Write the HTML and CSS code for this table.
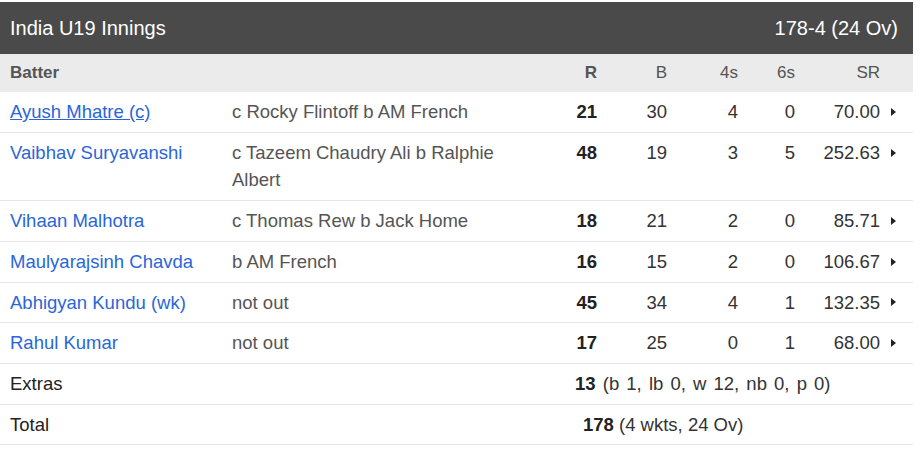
FILE: index.html
```html
<!DOCTYPE html>
<html>
<head>
<meta charset="utf-8">
<link rel="stylesheet" href="styles.css">
</head>
<body>
<div class="card">
  <div class="title">
    <span>India U19 Innings</span>
    <span>178-4 (24 Ov)</span>
  </div>
  <div class="row head">
    <div class="c-name bold">Batter</div>
    <div></div>
    <div class="num bold">R</div>
    <div class="num">B</div>
    <div class="num">4s</div>
    <div class="num">6s</div>
    <div class="num">SR</div>
    <div></div>
  </div>
  <div class="row">
    <div class="c-name"><a class="link underline" href="#">Ayush Mhatre (c)</a></div>
    <div class="dis">c Rocky Flintoff b AM French</div>
    <div class="num runs">21</div>
    <div class="num">30</div>
    <div class="num">4</div>
    <div class="num">0</div>
    <div class="num">70.00</div>
    <div class="arr"><span class="tri"></span></div>
  </div>
  <div class="row">
    <div class="c-name"><a class="link" href="#">Vaibhav Suryavanshi</a></div>
    <div class="dis">c Tazeem Chaudry Ali b Ralphie Albert</div>
    <div class="num runs">48</div>
    <div class="num">19</div>
    <div class="num">3</div>
    <div class="num">5</div>
    <div class="num">252.63</div>
    <div class="arr"><span class="tri"></span></div>
  </div>
  <div class="row">
    <div class="c-name"><a class="link" href="#">Vihaan Malhotra</a></div>
    <div class="dis">c Thomas Rew b Jack Home</div>
    <div class="num runs">18</div>
    <div class="num">21</div>
    <div class="num">2</div>
    <div class="num">0</div>
    <div class="num">85.71</div>
    <div class="arr"><span class="tri"></span></div>
  </div>
  <div class="row">
    <div class="c-name"><a class="link" href="#">Maulyarajsinh Chavda</a></div>
    <div class="dis">b AM French</div>
    <div class="num runs">16</div>
    <div class="num">15</div>
    <div class="num">2</div>
    <div class="num">0</div>
    <div class="num">106.67</div>
    <div class="arr"><span class="tri"></span></div>
  </div>
  <div class="row">
    <div class="c-name"><a class="link" href="#">Abhigyan Kundu (wk)</a></div>
    <div class="dis">not out</div>
    <div class="num runs">45</div>
    <div class="num">34</div>
    <div class="num">4</div>
    <div class="num">1</div>
    <div class="num">132.35</div>
    <div class="arr"><span class="tri"></span></div>
  </div>
  <div class="row">
    <div class="c-name"><a class="link" href="#">Rahul Kumar</a></div>
    <div class="dis">not out</div>
    <div class="num runs">17</div>
    <div class="num">25</div>
    <div class="num">0</div>
    <div class="num">1</div>
    <div class="num">68.00</div>
    <div class="arr"><span class="tri"></span></div>
  </div>
  <div class="row">
    <div class="c-name label">Extras</div>
    <div></div>
    <div class="summary extras"><b>13</b> (b 1, lb 0, w 12, nb 0, p 0)</div>
  </div>
  <div class="row">
    <div class="c-name label">Total</div>
    <div></div>
    <div class="summary total"><b>178</b> (4 wkts, 24 Ov)</div>
  </div>
</div>
</body>
</html>
```

FILE: styles.css
```css
html, body {
  margin: 0;
  padding: 0;
  background: #fff;
}
body {
  font-family: "Liberation Sans", Arial, sans-serif;
  padding-top: 2px;
}
.card {
  width: 913px;
}
.title {
  display: flex;
  justify-content: space-between;
  align-items: center;
  height: 52px;
  background: #4a4a4a;
  color: #fff;
  font-size: 20px;
  padding: 0 15px 0 10px;
  box-sizing: border-box;
}
.row {
  display: grid;
  grid-template-columns: 232px 300px 65px 70px 71px 57px 85px 1fr;
  align-items: start;
  font-size: 18.5px;
  line-height: 27.7px;
  padding: 6px 0;
  border-bottom: 1px solid #e6e6e6;
  color: #333;
}
.row.head {
  background: #ebebeb;
  color: #555;
  font-size: 17px;
  line-height: 26px;
  padding: 6px 0;
  border-bottom: none;
}
.bold { font-weight: bold; }
.c-name {
  padding-left: 10px;
}
.num {
  text-align: right;
}
.runs {
  font-weight: bold;
  color: #222;
}
.dis {
  color: #555;
}
.link {
  color: #2a66d9;
  text-decoration: none;
}
.link.underline {
  text-decoration: underline;
}
.label {
  color: #222;
}
.arr {
  display: flex;
  align-items: center;
  height: 27.7px;
  padding-left: 11px;
}
.tri {
  width: 0;
  height: 0;
  border-top: 4px solid transparent;
  border-bottom: 4px solid transparent;
  border-left: 5px solid #222;
}
.summary {
  grid-column: 3 / 9;
  color: #333;
}
.summary b {
  color: #222;
}
.extras {
  padding-left: 43px;
  word-spacing: 2px;
}
.total { padding-left: 51px; }
```
